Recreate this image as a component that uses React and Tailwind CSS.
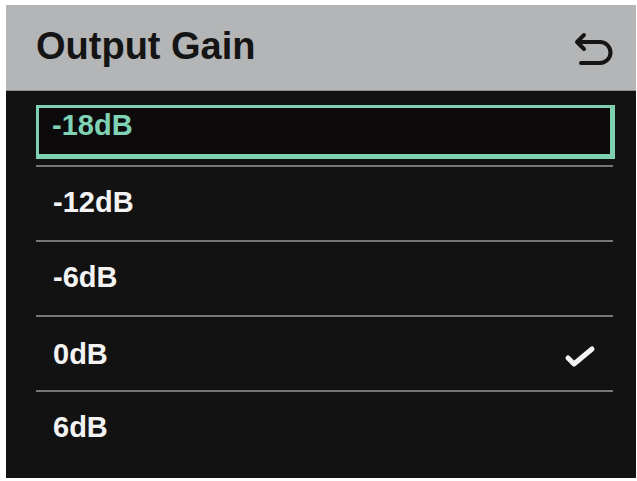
import React from 'react';

const OPTIONS = ['-18dB', '-12dB', '-6dB', '0dB', '6dB'];
const SELECTED = 0;
const CHECKED = 3;

// back arrow in the header
const BackIcon = () => (
  <svg width="40" height="34" viewBox="0 0 40 34" fill="none" stroke="#151515" strokeWidth="4" strokeLinecap="round" strokeLinejoin="round">
    <polyline points="10,4 3,11 10,18" />
    <path d="M4 11 H26 A10.5 10.5 0 0 1 26 32 H7" />
  </svg>
);

const CheckIcon = () => (
  <svg width="34" height="26" viewBox="0 0 34 26" fill="none" stroke="#f4f4f4" strokeWidth="5" strokeLinecap="round" strokeLinejoin="round">
    <path d="M5 15 L11 21 L29 6" />
  </svg>
);

const Row = ({ label, selected, checked, first }) => {
  if (selected) {
    return (
      <div className={`${first ? 'pt-[14px]' : 'pt-[6px]'} pb-[6px]`}>
        <div className="h-[54px] border-l-[3px] border-t-[3px] border-r-[5px] border-b-[5px] border-[#7fcfb1] bg-[#0d0a0b] pl-[13px] pt-[3px]">
          <span className="text-[29px] leading-[29px] font-bold text-[#7fd2b3]">{label}</span>
        </div>
      </div>
    );
  }
  return (
    <div className="h-[73px] flex items-center justify-between pl-[17px] pr-[18px] pb-[3px]">
      <span className={`text-[29px] leading-[29px] font-bold text-[#f3f3f3] ${checked ? 'pt-[4px]' : ''}`}>{label}</span>
      {checked && (
        <div className="pt-[8px]">
          <CheckIcon />
        </div>
      )}
    </div>
  );
};

export default function App() {
  return (
    <div
      className="w-[637px] h-[481px] bg-white pt-[5px] pl-[6px] pr-[1px] pb-[3px] flex flex-col"
      style={{ fontFamily: '"Liberation Sans", Arial, sans-serif' }}
    >
      <header className="h-[86px] shrink-0 bg-[#b4b5b6] flex items-start justify-between pl-[30px] pr-[22px] border-b border-[#8a8b8c]">
        <h1 className="pt-[22px] text-[38px] leading-[38px] font-bold text-[#141414]">Output Gain</h1>
        <div className="pt-[26px]">
          <BackIcon />
        </div>
      </header>

      <main className="flex-1 bg-[#121212] pl-[30px] pr-[21px]">
        {OPTIONS.map((label, i) => (
          <div key={label}>
            {i > 0 && <div className="h-[2px] bg-[#767676] mr-[2px]" />}
            <Row label={label} selected={i === SELECTED} checked={i === CHECKED} first={i === 0} />
          </div>
        ))}
      </main>
    </div>
  );
}
